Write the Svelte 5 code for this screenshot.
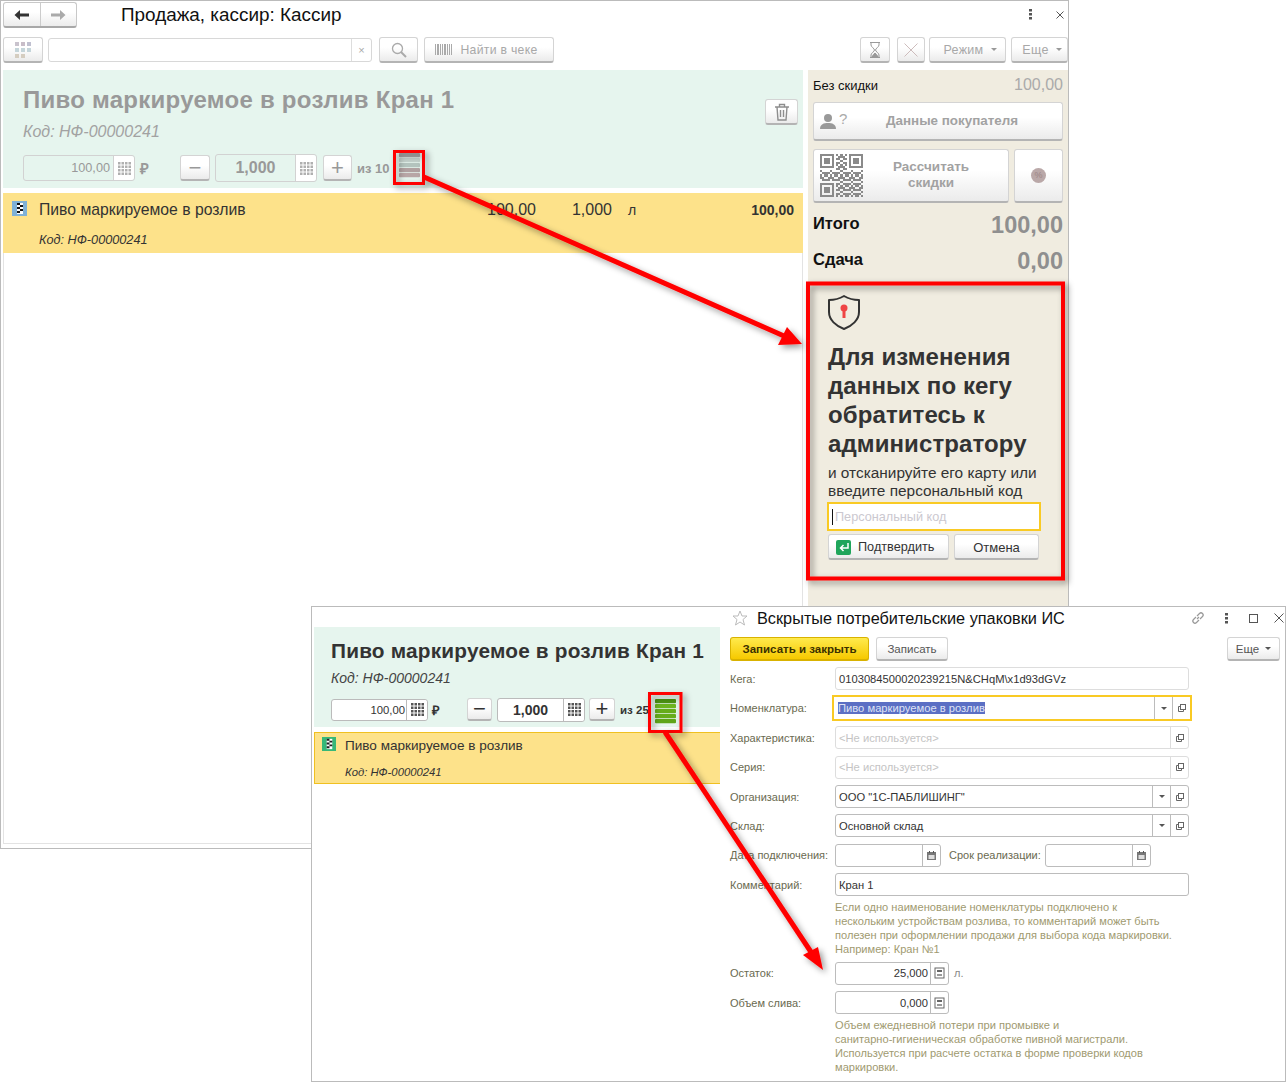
<script>
  const rows = [
    { label: 'Кега:', value: '0103084500020239215N&CHqM\\x1d93dGVz', kind: 'pale' },
    { label: 'Номенклатура:', value: 'Пиво маркируемое в розлив', kind: 'focus', drop: true, open: true },
    { label: 'Характеристика:', value: '<Не используется>', kind: 'off', open: true },
    { label: 'Серия:', value: '<Не используется>', kind: 'off', open: true },
    { label: 'Организация:', value: 'ООО "1С-ПАБЛИШИНГ"', kind: 'on', drop: true, open: true },
    { label: 'Склад:', value: 'Основной склад', kind: 'on', drop: true, open: true }
  ];

  function inFinder(x, y, ox, oy) {
    return x >= ox && x < ox + 7 && y >= oy && y < oy + 7;
  }
  function finderOn(x, y, ox, oy) {
    const dx = x - ox;
    const dy = y - oy;
    const ring = dx === 0 || dx === 6 || dy === 0 || dy === 6;
    const core = dx >= 2 && dx <= 4 && dy >= 2 && dy <= 4;
    return ring || core;
  }
  const qr = [];
  for (let y = 0; y < 21; y++) {
    for (let x = 0; x < 21; x++) {
      const corners = [[0, 0], [14, 0], [0, 14]];
      const hit = corners.find((c) => inFinder(x, y, c[0], c[1]));
      let on;
      if (hit) on = finderOn(x, y, hit[0], hit[1]);
      else if ((x === 7 && y < 8) || (y === 7 && x < 8) || (x === 13 && y < 8) || (y === 7 && x > 12) || (x === 7 && y > 12) || (y === 13 && x < 8)) on = false;
      else on = (x * x * 3 + y * 7 + x * y * 5) % 5 < 3;
      if (on) qr.push([x, y]);
    }
  }
</script>

{#snippet keypad(color)}
  <svg class="pad" viewBox="0 0 13 13" width="13" height="13" fill={color}>
    {#each [0, 3.5, 7, 10.5] as y}
      {#each [0, 3.5, 7, 10.5] as x}
        <rect x={x} y={y} width="2.500" height="2.500" />
      {/each}
    {/each}
  </svg>
{/snippet}

{#snippet calc()}
  <svg viewBox="0 0 11 12" width="11" height="12"><rect x="1" y="1" width="9" height="10" fill="#fff" stroke="#666" /><rect x="3" y="3" width="5" height="2" fill="#666" /><rect x="3" y="7" width="5" height="2" fill="#999" /></svg>
{/snippet}

{#snippet cal()}
  <svg viewBox="0 0 11 11" width="11" height="11"><rect x="1" y="2" width="9" height="8" fill="#777" /><rect x="2.500" y="5" width="6" height="4" fill="#ddd" /><rect x="3" y="1" width="1" height="2" fill="#555" /><rect x="7" y="1" width="1" height="2" fill="#555" /></svg>
{/snippet}

{#snippet openIcon()}
  <svg viewBox="0 0 10 10" width="10" height="10" fill="none" stroke="#666"><rect x="3.500" y="1.500" width="5" height="5" /><path d="M3.500 3.500H1.500V8.500H6.500V6.500" /></svg>
{/snippet}

{#snippet stack(colors)}
  <svg viewBox="0 0 21 25" width="21" height="25">
    {#each colors as c, i}
      <rect x="0" y={i * 5} width="21" height="4.300" rx="1" fill={c} />
    {/each}
  </svg>
{/snippet}

<div class="desk">
  <section class="win one">
    <header class="head">
      <div class="nav">
        <span class="navb">
          <svg viewBox="0 0 16 12" width="16" height="12"><path d="M0.500 6 6 1V4.500H15V7.500H6V11Z" fill="#333" /></svg>
        </span>
        <span class="navb">
          <svg viewBox="0 0 16 12" width="16" height="12"><path d="M15.500 6 10 1V4.500H1V7.500H10V11Z" fill="#aaa" /></svg>
        </span>
      </div>
      <h1>Продажа, кассир: Кассир</h1>
      <span class="dots">
        <svg viewBox="0 0 3 11" width="3" height="11" fill="#555"><rect width="3" height="2.500" /><rect y="4" width="3" height="2.500" /><rect y="8" width="3" height="2.500" /></svg>
      </span>
      <span class="close">
        <svg viewBox="0 0 8 8" width="8" height="8" stroke="#555" fill="none"><path d="M0.500 0.500 7.500 7.500M7.500 0.500 0.500 7.500" /></svg>
      </span>
    </header>

    <div class="tools">
      <span class="btn w40">
        <svg viewBox="0 0 16 16" width="16" height="16">
          <rect width="4" height="4" fill="#c9c3cd" /><rect x="6" width="4" height="4" fill="#c8bdc8" /><rect x="12" width="4" height="4" fill="#c0c0d0" />
          <rect y="6" width="4" height="4" fill="#c5d5da" /><rect x="6" y="6" width="4" height="4" fill="#c5d5da" /><rect x="12" y="6" width="4" height="4" fill="#c5d5da" />
          <rect y="12" width="4" height="4" fill="#d5cdc0" /><rect x="6" y="12" width="4" height="4" fill="#d5cdc0" />
        </svg>
      </span>
      <div class="search">
        <span class="grow"></span>
        <span class="sx">×</span>
      </div>
      <span class="btn w39">
        <svg viewBox="0 0 16 16" width="16" height="16" fill="none" stroke="#aaa" stroke-width="1.300"><circle cx="6.500" cy="6.500" r="5" /><path d="M10 10 15 15" stroke-width="2" /></svg>
      </span>
      <span class="btn w130">
        <svg viewBox="0 0 17 11" width="17" height="11" fill="#aaa"><rect width="1" height="11" /><rect x="2" width="2" height="11" /><rect x="5" width="1" height="11" /><rect x="7" width="1" height="11" /><rect x="9" width="2" height="11" /><rect x="12" width="1" height="11" /><rect x="14" width="1" height="11" /><rect x="16" width="1" height="11" /></svg>
        <span class="btxt">Найти в чеке</span>
      </span>
      <span class="push"></span>
      <span class="btn w30">
        <svg viewBox="0 0 12 16" width="12" height="16" fill="none" stroke="#999"><path d="M1 .5H11M1 15.500H11M2 1V3C2 5 5.500 6.500 5.500 8 5.500 9.500 2 11 2 13V15M10 1V3C10 5 6.500 6.500 6.500 8 6.500 9.500 10 11 10 13V15" /><path d="M3 14.500 6 11 9 14.500Z" fill="#999" /></svg>
      </span>
      <span class="btn w28">
        <svg viewBox="0 0 14 14" width="14" height="14" fill="none" stroke="#cdbcbc"><path d="M0.500 0.500 13.500 13.500M13.500 0.500 0.500 13.500" /></svg>
      </span>
      <span class="btn w77"><span class="btxt">Режим</span><i class="caret"></i></span>
      <span class="btn w57"><span class="btxt">Еще</span><i class="caret"></i></span>
    </div>

    <div class="main">
      <div class="left">
        <div class="green">
          <div class="ghead">
            <div>
              <h2>Пиво маркируемое в розлив Кран 1</h2>
              <p class="code">Код: НФ-00000241</p>
            </div>
            <span class="btn trash">
              <svg viewBox="0 0 16 18" width="16" height="18" fill="none" stroke="#8e8e8e" stroke-width="1.400"><path d="M1 4H15M5.500 4V1.500H10.500V4M3 4 4 17H12L13 4M6.500 7V14M9.500 7V14" /></svg>
            </span>
          </div>
          <div class="ctrl">
            <div class="num price"><span class="nv">100,00</span><span class="pbtn">{@render keypad('#b0b0b0')}</span></div>
            <b class="rub">₽</b>
            <span class="btn sq mt"><i class="ms">−</i></span>
            <div class="num qty"><b class="nv">1,000</b><span class="pbtn">{@render keypad('#b0b0b0')}</span></div>
            <span class="btn sq pl"><i class="ms">+</i></span>
            <b class="of">из 10</b>
            <span class="stk">{@render stack(['#a6a6a6', '#c3d1cb', '#b3c3bd', '#b0a0a0', '#b8a6a6'])}</span>
          </div>
        </div>
        <div class="table">
          <div class="row">
            <div class="l1">
              <svg class="ico" viewBox="0 0 15 15" width="15" height="15"><rect width="15" height="15" fill="#7fb1d6" /><rect x="5" y="2" width="6" height="11" fill="#fff" /><path d="M5 2h3v2H5zM8 4h3v2H8zM5 6h3v2H5zM8 8h3v2H8zM5 10h3v2H5z" fill="#111" /></svg>
              <span class="nm">Пиво маркируемое в розлив</span>
              <span class="c1">100,00</span>
              <span class="c2">1,000</span>
              <span class="c3">л</span>
              <b class="c4">100,00</b>
            </div>
            <div class="l2">Код: НФ-00000241</div>
          </div>
        </div>
      </div>

      <aside class="side">
        <div class="nodisc"><span>Без скидки</span><span class="gr">100,00</span></div>
        <span class="btn buyer">
          <svg viewBox="0 0 16 17" width="16" height="17"><circle cx="8" cy="5" r="4" fill="#999" /><path d="M0 16C0 11 4 10 8 10S16 11 16 16Z" fill="#999" /></svg>
          <span class="ask">?</span>
          <b>Данные покупателя</b>
        </span>
        <div class="calcrow">
          <span class="btn qrb">
            <svg viewBox="0 0 21 21" width="43" height="43" fill="#8a8a8a" shape-rendering="crispEdges">
              {#each qr as p}
                <rect x={p[0]} y={p[1]} width="1" height="1" />
              {/each}
            </svg>
            <b>Рассчитать<br />скидки</b>
          </span>
          <span class="btn pct"><i>%</i></span>
        </div>
        <div class="tot"><b>Итого</b><b class="big">100,00</b></div>
        <div class="tot"><b>Сдача</b><b class="big">0,00</b></div>

        <div class="pop">
          <svg class="shield" viewBox="0 0 34 37" width="34" height="37">
            <path d="M17 2C22 5 27 6 32 6V18C32 26 25 32 17 35 9 32 2 26 2 18V6C7 6 12 5 17 2Z" fill="none" stroke="#333" stroke-width="2" stroke-linejoin="round" />
            <circle cx="17" cy="14" r="3.500" fill="#ef4444" /><rect x="15.500" y="15" width="3" height="9" fill="#ef4444" />
          </svg>
          <h3>Для изменения данных по кегу обратитесь к администратору</h3>
          <p>и отсканируйте его карту или введите персональный код</p>
          <div class="pin"><i class="cursor"></i><span>Персональный код</span></div>
          <div class="acts">
            <span class="btn ok">
              <span class="enter"><svg viewBox="0 0 12 12" width="12" height="12" fill="none" stroke="#fff" stroke-width="1.500"><path d="M10 2V7H3M5.500 4 2.500 7 5.500 10" /></svg></span>
              Подтвердить
            </span>
            <span class="btn cancel">Отмена</span>
          </div>
        </div>
      </aside>
    </div>
  </section>

  <section class="win two">
    <div class="wleft">
      <div class="green g2">
        <h2>Пиво маркируемое в розлив Кран 1</h2>
        <p class="code">Код: НФ-00000241</p>
        <div class="ctrl">
          <div class="num price"><span class="nv">100,00</span><span class="pbtn">{@render keypad('#555')}</span></div>
          <b class="rub">₽</b>
          <span class="btn sq mt"><i class="ms">−</i></span>
          <div class="num qty"><b class="nv">1,000</b><span class="pbtn">{@render keypad('#555')}</span></div>
          <span class="btn sq pl"><i class="ms">+</i></span>
          <b class="of">из 25</b>
          <span class="stk">{@render stack(['#4d9413', '#6cb31f', '#66ac1b', '#66ac1b', '#5fa518'])}</span>
        </div>
      </div>
      <div class="row2">
        <div class="l1">
          <svg class="ico" viewBox="0 0 15 15" width="14" height="14"><rect width="15" height="15" fill="#37b878" /><rect x="5" y="2" width="6" height="11" fill="#fff" /><path d="M5 2h3v2H5zM8 4h3v2H8zM5 6h3v2H5zM8 8h3v2H8zM5 10h3v2H5z" fill="#222" /></svg>
          <span class="nm">Пиво маркируемое в розлив</span>
        </div>
        <div class="l2">Код: НФ-00000241</div>
      </div>
    </div>

    <div class="wright">
      <header class="fhead">
        <svg viewBox="0 0 16 16" width="16" height="16" fill="none" stroke="#bbb"><path d="M8 1 10 6H15L11 9.500 12.500 15 8 12 3.500 15 5 9.500 1 6H6Z" /></svg>
        <h4>Вскрытые потребительские упаковки ИС</h4>
        <svg class="lnk" viewBox="0 0 14 14" width="14" height="14" fill="none" stroke="#999" stroke-width="1.200"><path d="M6 8 8 6M5 6 2.500 8.500A2 2 0 0 0 5.500 11.500L8 9M6 5 8.500 2.500A2 2 0 0 1 11.500 5.500L9 8" /></svg>
        <svg class="fdots" viewBox="0 0 3 11" width="3" height="11" fill="#555"><rect width="3" height="2.500" /><rect y="4" width="3" height="2.500" /><rect y="8" width="3" height="2.500" /></svg>
        <svg class="fsq" viewBox="0 0 9 9" width="9" height="9" fill="none" stroke="#555"><rect x=".5" y=".5" width="8" height="8" /></svg>
        <svg class="fx" viewBox="0 0 10 10" width="10" height="10" fill="none" stroke="#555"><path d="M.5.5 9.500 9.500M9.500.5.500 9.500" /></svg>
      </header>
      <div class="fbar">
        <span class="btn save">Записать и закрыть</span>
        <span class="btn rec">Записать</span>
        <span class="push"></span>
        <span class="btn more"><span>Еще</span><i class="caret dk"></i></span>
      </div>
      <div class="form">
        {#each rows as r}
          <div class="frow">
            <label>{r.label}</label>
            <div class="field {r.kind}">
              <span class="fv"><span class={r.kind === 'focus' ? 'sel' : ''}>{r.value}</span></span>
              {#if r.drop}<span class="fb"><i class="caret dk"></i></span>{/if}
              {#if r.open}<span class="fb">{@render openIcon()}</span>{/if}
            </div>
          </div>
        {/each}
        <div class="frow">
          <label>Дата подключения:</label>
          <div class="field on date"><span class="fv"></span><span class="fb">{@render cal()}</span></div>
          <label class="mid">Срок реализации:</label>
          <div class="field on date"><span class="fv"></span><span class="fb">{@render cal()}</span></div>
        </div>
        <div class="frow">
          <label>Комментарий:</label>
          <div class="field on"><span class="fv">Кран 1</span></div>
        </div>
        <p class="note">Если одно наименование номенклатуры подключено к<br />нескольким устройствам розлива, то комментарий может быть<br />полезен при оформлении продажи для выбора кода маркировки.<br />Например: Кран №1</p>
        <div class="frow">
          <label>Остаток:</label>
          <div class="field on amount"><span class="fv r">25,000</span><span class="fb">{@render calc()}</span></div>
          <span class="unit">л.</span>
        </div>
        <div class="frow">
          <label>Объем слива:</label>
          <div class="field on amount"><span class="fv r">0,000</span><span class="fb">{@render calc()}</span></div>
        </div>
        <p class="note n2">Объем ежедневной потери при промывке и<br />санитарно-гигиеническая обработке пивной магистрали.<br />Используется при расчете остатка в форме проверки кодов<br />маркировки.</p>
      </div>
    </div>
  </section>

  <svg class="marks" viewBox="0 0 1287 1082" width="1287" height="1082">
    <defs>
      <filter id="sh" x="-20%" y="-20%" width="140%" height="140%"><feDropShadow dx="3" dy="3" stdDeviation="3" flood-color="#000" flood-opacity=".4" /></filter>
    </defs>
    <g filter="url(#sh)" fill="none" stroke="#f00" stroke-width="3">
      <rect x="394.500" y="151.500" width="29" height="32" />
      <rect x="649.500" y="693.500" width="31.500" height="38" />
    </g>
    <g filter="url(#sh)" fill="none" stroke="#f00" stroke-width="4">
      <rect x="808" y="283.500" width="255" height="295" />
    </g>
    <g filter="url(#sh)">
      <path d="M424 177 784 336" fill="none" stroke="#f00" stroke-width="5" />
      <path d="M787 327 778 345 802 344Z" fill="#f00" />
    </g>
    <g filter="url(#sh)">
      <path d="M665 732 811 952" fill="none" stroke="#f00" stroke-width="5" />
      <path d="M803 955 818 947 823 970Z" fill="#f00" />
    </g>
  </svg>
</div>

<style>
  :global(body) { margin: 0; background: #fff; }
  .desk { position: relative; width: 1287px; height: 1082px; overflow: hidden; font-family: "Liberation Sans", Arial, sans-serif; color: #333; }
  h1, h2, h3, h4, p { margin: 0; font-weight: normal; }
  i { font-style: normal; }
  .win { position: absolute; box-sizing: border-box; background: #fff; border: 1px solid #bbb; }
  .one { left: 0; top: 0; width: 1069px; height: 849px; }
  .two { left: 311px; top: 606px; width: 975px; height: 476px; display: flex; }

  .btn { box-sizing: border-box; display: inline-flex; align-items: center; justify-content: center; border: 1px solid #d4d4d4; border-bottom: 2px solid #b4b4b4; border-radius: 3px; background: linear-gradient(#fff 40%, #ebebeb); flex: none; }

  .head { height: 30px; display: flex; align-items: center; padding-left: 2px; }
  .nav { box-sizing: border-box; display: flex; width: 74px; height: 26px; margin-top: -2px; border: 1px solid #c8c8c8; border-bottom: 2px solid #a8a8a8; border-radius: 3px; background: linear-gradient(#fff 40%, #ececec); }
  .navb { flex: 1; display: flex; align-items: center; justify-content: center; }
  .navb + .navb { border-left: 1px solid #ccc; }
  h1 { margin: -2px 0 0 44px; font-size: 18.900px; color: #111; flex: 1; }
  .dots { width: 3px; margin: -3px 24px 0 0; display: flex; }
  .close { margin: -3px 4px 0 0; display: flex; }

  .tools { height: 26px; margin-top: 6px; padding-left: 2px; display: flex; gap: 5px; }
  .tools .btn { height: 26px; color: #a8a8a8; font-size: 12.500px; }
  .w40 { width: 40px; } .w39 { width: 39px; margin-left: 2px; } .w130 { width: 130px; margin-left: 1px; padding-right: 6px; }
  .btxt { margin-left: 10px; letter-spacing: .3px; }
  .w130 .btxt { margin-left: 9px; font-size: 12.200px; }
  .w30 { width: 30px; } .w28 { width: 28px; margin-left: 2px; } .w77 { width: 77px; margin-left: -1px; padding-right: 5px; } .w57 { width: 57px; padding-right: 5px; }
  .push { flex: 1; }
  .search { box-sizing: border-box; width: 324px; height: 24px; margin-top: 1px; display: flex; border: 1px solid #d8d8d8; border-radius: 3px; }
  .grow { flex: 1; }
  .sx { width: 19px; border-left: 1px solid #ddd; text-align: center; color: #aaa; font-size: 11px; line-height: 22px; }
  .caret { display: inline-block; margin-left: 7px; border: 3px solid transparent; border-top: 3px solid #999; border-bottom: 0; }
  .caret.dk { border-top-color: #555; margin: 0; }

  .main { display: flex; gap: 5px; margin-top: 7px; padding-left: 2px; }
  .left { width: 800px; flex: none; display: flex; flex-direction: column; gap: 5px; }
  .green { box-sizing: border-box; background: #e6f5ee; }
  .one .green { height: 118px; padding: 16px 5px 0 20px; }
  .ghead { display: flex; justify-content: space-between; height: 68px; }
  .one h2 { font-size: 24px; line-height: 28px; font-weight: bold; color: #999; letter-spacing: .26px; }
  .one .code { margin-top: 8px; font-size: 16px; line-height: 20px; font-style: italic; color: #a2a2a2; }
  .trash { width: 33px; height: 26px; margin-top: 13px; }

  .ctrl { display: flex; align-items: center; }
  .num { box-sizing: border-box; display: flex; border: 1px solid #d2d2d2; border-radius: 3px; }
  .nv { flex: 1; text-align: right; align-self: center; padding-right: 3px; }
  .pbtn { width: 20px; background: #fff; border-left: 1px solid #d2d2d2; display: flex; align-items: center; justify-content: center; border-radius: 0 3px 3px 0; }
  .one .ctrl { height: 28px; color: #999; }
  .one .price { width: 112px; height: 26px; font-size: 12.700px; }
  .rub { margin-left: 5px; font-size: 15px; width: 40px; }
  .sq { height: 26px; }
  .ms { font-size: 22px; line-height: 20px; color: #999; font-weight: normal; }
  .one .mt { width: 30px; }
  .one .qty { width: 102px; height: 28px; margin-left: 5px; font-size: 16px; }
  .one .qty .nv { text-align: center; padding: 0; }
  .one .pl { width: 29px; margin-left: 6px; }
  .one .of { margin-left: 5px; width: 42px; font-size: 13px; color: #999; }
  .stk { display: flex; }
  .one .stk { margin-top: -5px; }
  .one .rub { color: #999; }

  .table { box-sizing: border-box; height: 651px; border: 1px solid #e3e3e3; border-top: 0; }
  .row { height: 60px; background: #fde28a; margin-left: -1px; margin-right: -1px; }
  .l1 { display: flex; align-items: center; color: #333; }
  .row .l1 { height: 34px; padding: 0 9px; font-size: 15.750px; }
  .ico { margin-top: -4px; flex: none; }
  .row .nm { margin-left: 12px; flex: 1; }
  .c1 { width: 100px; text-align: right; font-size: 16px; }
  .c2 { width: 76px; text-align: right; font-size: 16px; }
  .c3 { box-sizing: content-box; width: 44px; padding-left: 16px; font-size: 14px; }
  .c4 { width: 122px; text-align: right; font-size: 14px; }
  .l2 { font-style: italic; }
  .row .l2 { padding: 5px 0 0 36px; font-size: 12.700px; line-height: 16px; }

  .side { box-sizing: border-box; width: 260px; height: 775px; background: #f0ece0; padding: 0 5px; font-size: 14px; color: #111; }
  .nodisc { box-sizing: border-box; height: 32px; padding-bottom: 2px; display: flex; justify-content: space-between; align-items: center; font-size: 13px; }
  .gr { color: #aaa; font-size: 16px; }
  .buyer { width: 250px; height: 39px; justify-content: flex-start; padding-left: 6px; color: #a2a2a2; font-size: 13.400px; }
  .ask { width: 8px; margin: -5px 0 0 3px; font-size: 15px; color: #aaa; }
  .buyer b { margin: -2px 0 0 39px; }
  .calcrow { display: flex; gap: 5px; margin-top: 8px; }
  .qrb { width: 196px; height: 54px; justify-content: flex-start; padding-left: 6px; color: #a2a2a2; font-size: 13.500px; line-height: 16px; gap: 30px; text-align: center; }
  .qrb svg { flex: none; }
  .qrb b { margin-top: -2px; }
  .pct { width: 49px; height: 54px; }
  .pct i { width: 15px; height: 15px; border-radius: 50%; background: #baa8a8; color: #9c8686; font-size: 9px; text-align: center; line-height: 15px; }
  .tot { height: 36px; display: flex; justify-content: space-between; align-items: center; font-size: 16.500px; }
  .tot b:first-child { margin-top: -2px; }
  .big { color: #8f8f8f; font-size: 23.500px; margin-top: 2px; }
  .calcrow + .tot { margin-top: 3px; }

  .pop { box-sizing: border-box; width: 258px; height: 298px; margin: 4px 0 0 -7px; padding: 12px 0 0 22px; }
  .shield { display: block; margin-left: -1px; }
  h3 { margin-top: 11px; width: 215px; font-size: 24px; line-height: 29px; font-weight: bold; color: #333; letter-spacing: .1px; }
  .pop p { margin-top: 6px; font-size: 15.400px; line-height: 18px; color: #333; }
  .pin { box-sizing: border-box; width: 214px; height: 29px; margin: 2px 0 0 -1px; background: #fff; border: 2px solid #f9ca24; display: flex; align-items: center; padding-left: 3px; color: #cbc8cf; font-size: 12.700px; }
  .cursor { width: 1px; height: 16px; background: #111; margin-right: 2px; }
  .acts { display: flex; gap: 5px; margin-top: 3px; }
  .ok { width: 121px; height: 26px; padding: 1px 0 0 7px; justify-content: flex-start; font-size: 12.700px; color: #333; gap: 7px; }
  .cancel { width: 85px; height: 26px; padding-top: 1px; font-size: 13px; color: #333; }
  .enter { width: 15px; height: 15px; background: #1fa55b; border-radius: 2px; display: flex; align-items: center; justify-content: center; }

  .wleft { width: 408px; flex: none; padding: 20px 0 0 2px; box-sizing: border-box; }
  .g2 { height: 100px; padding: 14px 0 0 17px; }
  .g2 h2 { font-size: 20.800px; line-height: 20px; font-weight: bold; color: #333; letter-spacing: .2px; }
  .g2 .code { margin-top: 9px; font-size: 14px; line-height: 16px; font-style: italic; color: #444; }
  .g2 .ctrl { margin-top: 11px; height: 25px; color: #333; }
  .g2 .price { width: 97px; height: 22px; font-size: 11.300px; background: #fff; border-color: #bbb; }
  .g2 .price .nv { padding-right: 1px; }
  .g2 .pbtn { border-color: #bbb; }
  .g2 .rub { margin-left: 4px; width: 35px; font-size: 13px; }
  .g2 .mt { width: 25px; height: 23px; }
  .g2 .ms { color: #333; }
  .g2 .qty { width: 88px; height: 24px; margin-left: 5px; font-size: 14px; background: #fff; border-color: #bbb; }
  .g2 .qty .nv { text-align: center; padding: 0; }
  .g2 .pl { width: 26px; height: 23px; margin-left: 4px; }
  .g2 .of { margin-left: 5px; width: 35px; font-size: 11.500px; }
  .g2 .stk { margin-top: 4px; }
  .row2 { box-sizing: border-box; height: 52px; margin-top: 5px; background: #fde28a; border: 1px solid #f0c020; border-width: 1px 0 1px 1px; }
  .row2 .l1 { height: 25px; padding-left: 7px; font-size: 13.550px; }
  .row2 .nm { margin-left: 9px; }
  .row2 .l2 { padding: 6px 0 0 30px; font-size: 11.300px; line-height: 16px; }

  .wright { flex: 1; padding-left: 10px; font-size: 11px; }
  .fhead { height: 22px; display: flex; align-items: center; padding-left: 2px; }
  h4 { margin-left: 9px; font-size: 16.300px; color: #111; flex: 1; }
  .lnk { margin-right: 20px; }
  .fdots { margin-right: 21px; }
  .fsq { margin-right: 16px; }
  .fx { margin-right: 1px; }
  .fbar { display: flex; margin-top: 8px; gap: 7px; padding-right: 5px; }
  .fbar .btn { height: 24px; font-size: 11.500px; color: #555; }
  .save { width: 139px; border-color: #d9b200 !important; background: linear-gradient(#ffea4d, #f6c900) !important; color: #3a3000 !important; font-weight: bold; }
  .rec { width: 72px; }
  .more { width: 53px; gap: 6px; }
  .form { margin-top: 3.300px; }
  .frow { height: 29.400px; display: flex; align-items: center; font-size: 11px; color: #6a6a50; }
  label { width: 105px; flex: none; white-space: nowrap; }
  .mid { width: auto; margin: 0 4px 0 8px; }
  .field { box-sizing: border-box; width: 354px; height: 23px; display: flex; border: 1px solid #bcbcbc; border-radius: 3px; background: #fff; color: #333; font-size: 11.200px; }
  .fv { flex: 1; align-self: center; padding-left: 3px; white-space: nowrap; }
  .r { text-align: right; padding: 0 2px 0 0; font-size: 11.200px; }
  .fb { width: 17px; border-left: 1px solid #bcbcbc; display: flex; align-items: center; justify-content: center; }
  .pale { border-color: #ddd; }
  .off { border-color: #ddd; color: #c4c4c4; }
  .off .fb { border-color: #ddd; }
  .focus { width: 360px; height: 26px; margin-left: -3px; border: 2px solid #f9ca24; border-radius: 0; padding-left: 1px; }
  .sel { background: #5b6fc4; color: #dfe3f5; }
  .date { width: 106px; }
  .amount { width: 114px; }
  .unit { margin-left: 5px; color: #888; }
  .note { margin: 1px 0 0 105px; height: 58px; font-size: 11.100px; line-height: 14px; color: #a09a70; }
  .note.n2 { margin-top: 1px; }
  .marks { position: absolute; left: 0; top: 0; pointer-events: none; }
</style>
